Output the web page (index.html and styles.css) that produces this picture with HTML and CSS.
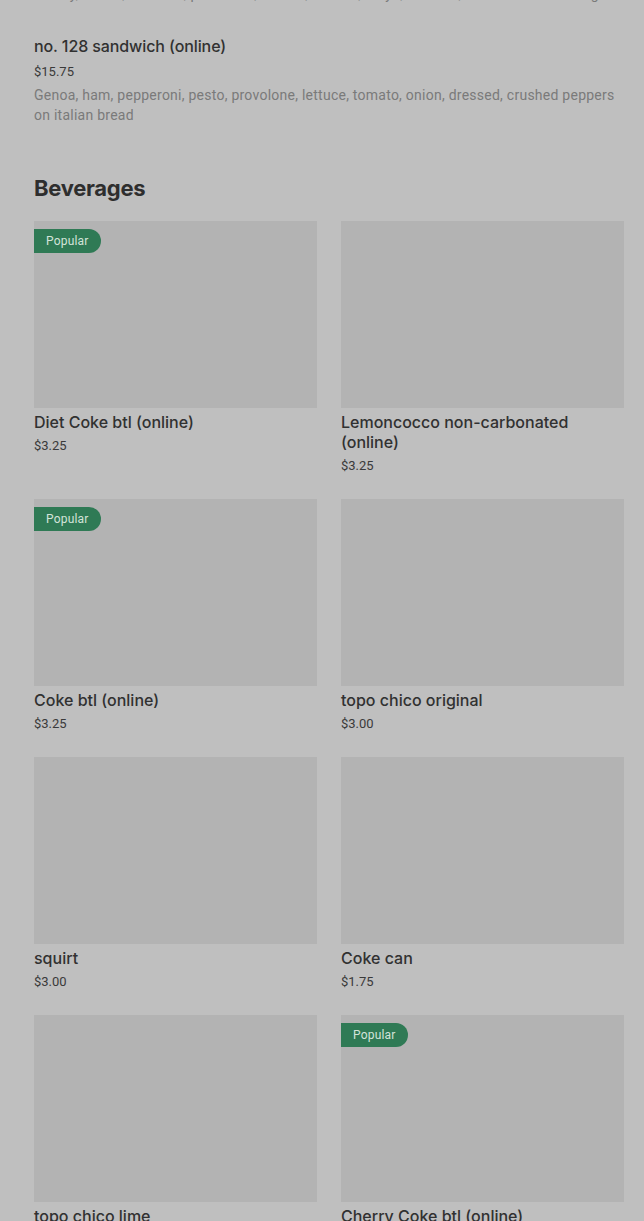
FILE: index.html
```html
<!DOCTYPE html>
<html lang="en">
<head>
<meta charset="utf-8">
<title>Menu</title>
<link rel="stylesheet" href="styles.css">
</head>
<body>
<main class="page">
  <p class="desc prev-desc">Turkey, bacon, avocado, provolone, lettuce, tomato, mayo, dressed, on toasted sourdough bread</p>

  <section class="item">
    <h3 class="item-title">no. 128 sandwich (online)</h3>
    <div class="price">$15.75</div>
    <p class="desc">Genoa, ham, pepperoni, pesto, provolone, lettuce, tomato, onion, dressed, crushed peppers on italian bread</p>
  </section>

  <h2 class="section-title">Beverages</h2>

  <div class="grid">
    <article class="card">
      <div class="thumb"><span class="badge">Popular</span></div>
      <h3 class="card-title">Diet Coke btl (online)</h3>
      <div class="price">$3.25</div>
    </article>
    <article class="card">
      <div class="thumb"></div>
      <h3 class="card-title">Lemoncocco non-carbonated (online)</h3>
      <div class="price">$3.25</div>
    </article>
    <article class="card">
      <div class="thumb"><span class="badge">Popular</span></div>
      <h3 class="card-title">Coke btl (online)</h3>
      <div class="price">$3.25</div>
    </article>
    <article class="card">
      <div class="thumb"></div>
      <h3 class="card-title">topo chico original</h3>
      <div class="price">$3.00</div>
    </article>
    <article class="card">
      <div class="thumb"></div>
      <h3 class="card-title">squirt</h3>
      <div class="price">$3.00</div>
    </article>
    <article class="card">
      <div class="thumb"></div>
      <h3 class="card-title">Coke can</h3>
      <div class="price">$1.75</div>
    </article>
    <article class="card">
      <div class="thumb"></div>
      <h3 class="card-title">topo chico lime</h3>
      <div class="price">$3.00</div>
    </article>
    <article class="card">
      <div class="thumb"><span class="badge">Popular</span></div>
      <h3 class="card-title">Cherry Coke btl (online)</h3>
      <div class="price">$3.25</div>
    </article>
  </div>
</main>
</body>
</html>
```
FILE: styles.css
```css
html, body {
  margin: 0;
  padding: 0;
  background: #bfbfbf;
}
body {
  font-family: Inter, Roboto, "Liberation Sans", sans-serif;
  color: #333333;
  overflow: hidden;
}
.page {
  padding: 0 20px 0 34px;
}
.desc {
  margin: 0;
  font-size: 14px;
  line-height: 20px;
  color: #7a7a7a;
  font-family: Roboto, "Liberation Sans", sans-serif;
  letter-spacing: 0.25px;
}
.prev-desc {
  margin-top: -16px;
  white-space: nowrap;
  overflow: hidden;
}
.item {
  padding-top: 30px;
}
.item-title {
  margin: 0;
  font-size: 16px;
  line-height: 24px;
  font-weight: 500;
  color: #313131;
  letter-spacing: -0.1px;
}
.price {
  font-size: 13px;
  line-height: 20px;
  color: #3a3a3a;
  font-family: Roboto, "Liberation Sans", sans-serif;
}
.item .price {
  margin-top: 4px;
  margin-bottom: 3px;
}
.section-title {
  margin: 49px 0 19px;
  font-size: 22px;
  line-height: 28px;
  font-weight: 700;
  letter-spacing: -0.3px;
  color: #2e2e2e;
}
.grid {
  display: grid;
  grid-template-columns: 1fr 1fr;
  column-gap: 24px;
  row-gap: 23px;
}
.card {
  display: flex;
  flex-direction: column;
}
.thumb {
  position: relative;
  height: 187px;
  background: #b3b3b3;
}
.badge {
  position: absolute;
  left: 0;
  top: 8px;
  height: 24px;
  line-height: 24px;
  padding: 0 12px;
  font-size: 12px;
  color: #d3e3d9;
  background: #2f7a55;
  border-radius: 0 12px 12px 0;
  font-family: Roboto, "Liberation Sans", sans-serif;
  letter-spacing: 0.2px;
}
.card-title {
  margin: 4px 0 4px;
  font-size: 16px;
  line-height: 20px;
  font-weight: 500;
  color: #313131;
  letter-spacing: 0;
}
```
